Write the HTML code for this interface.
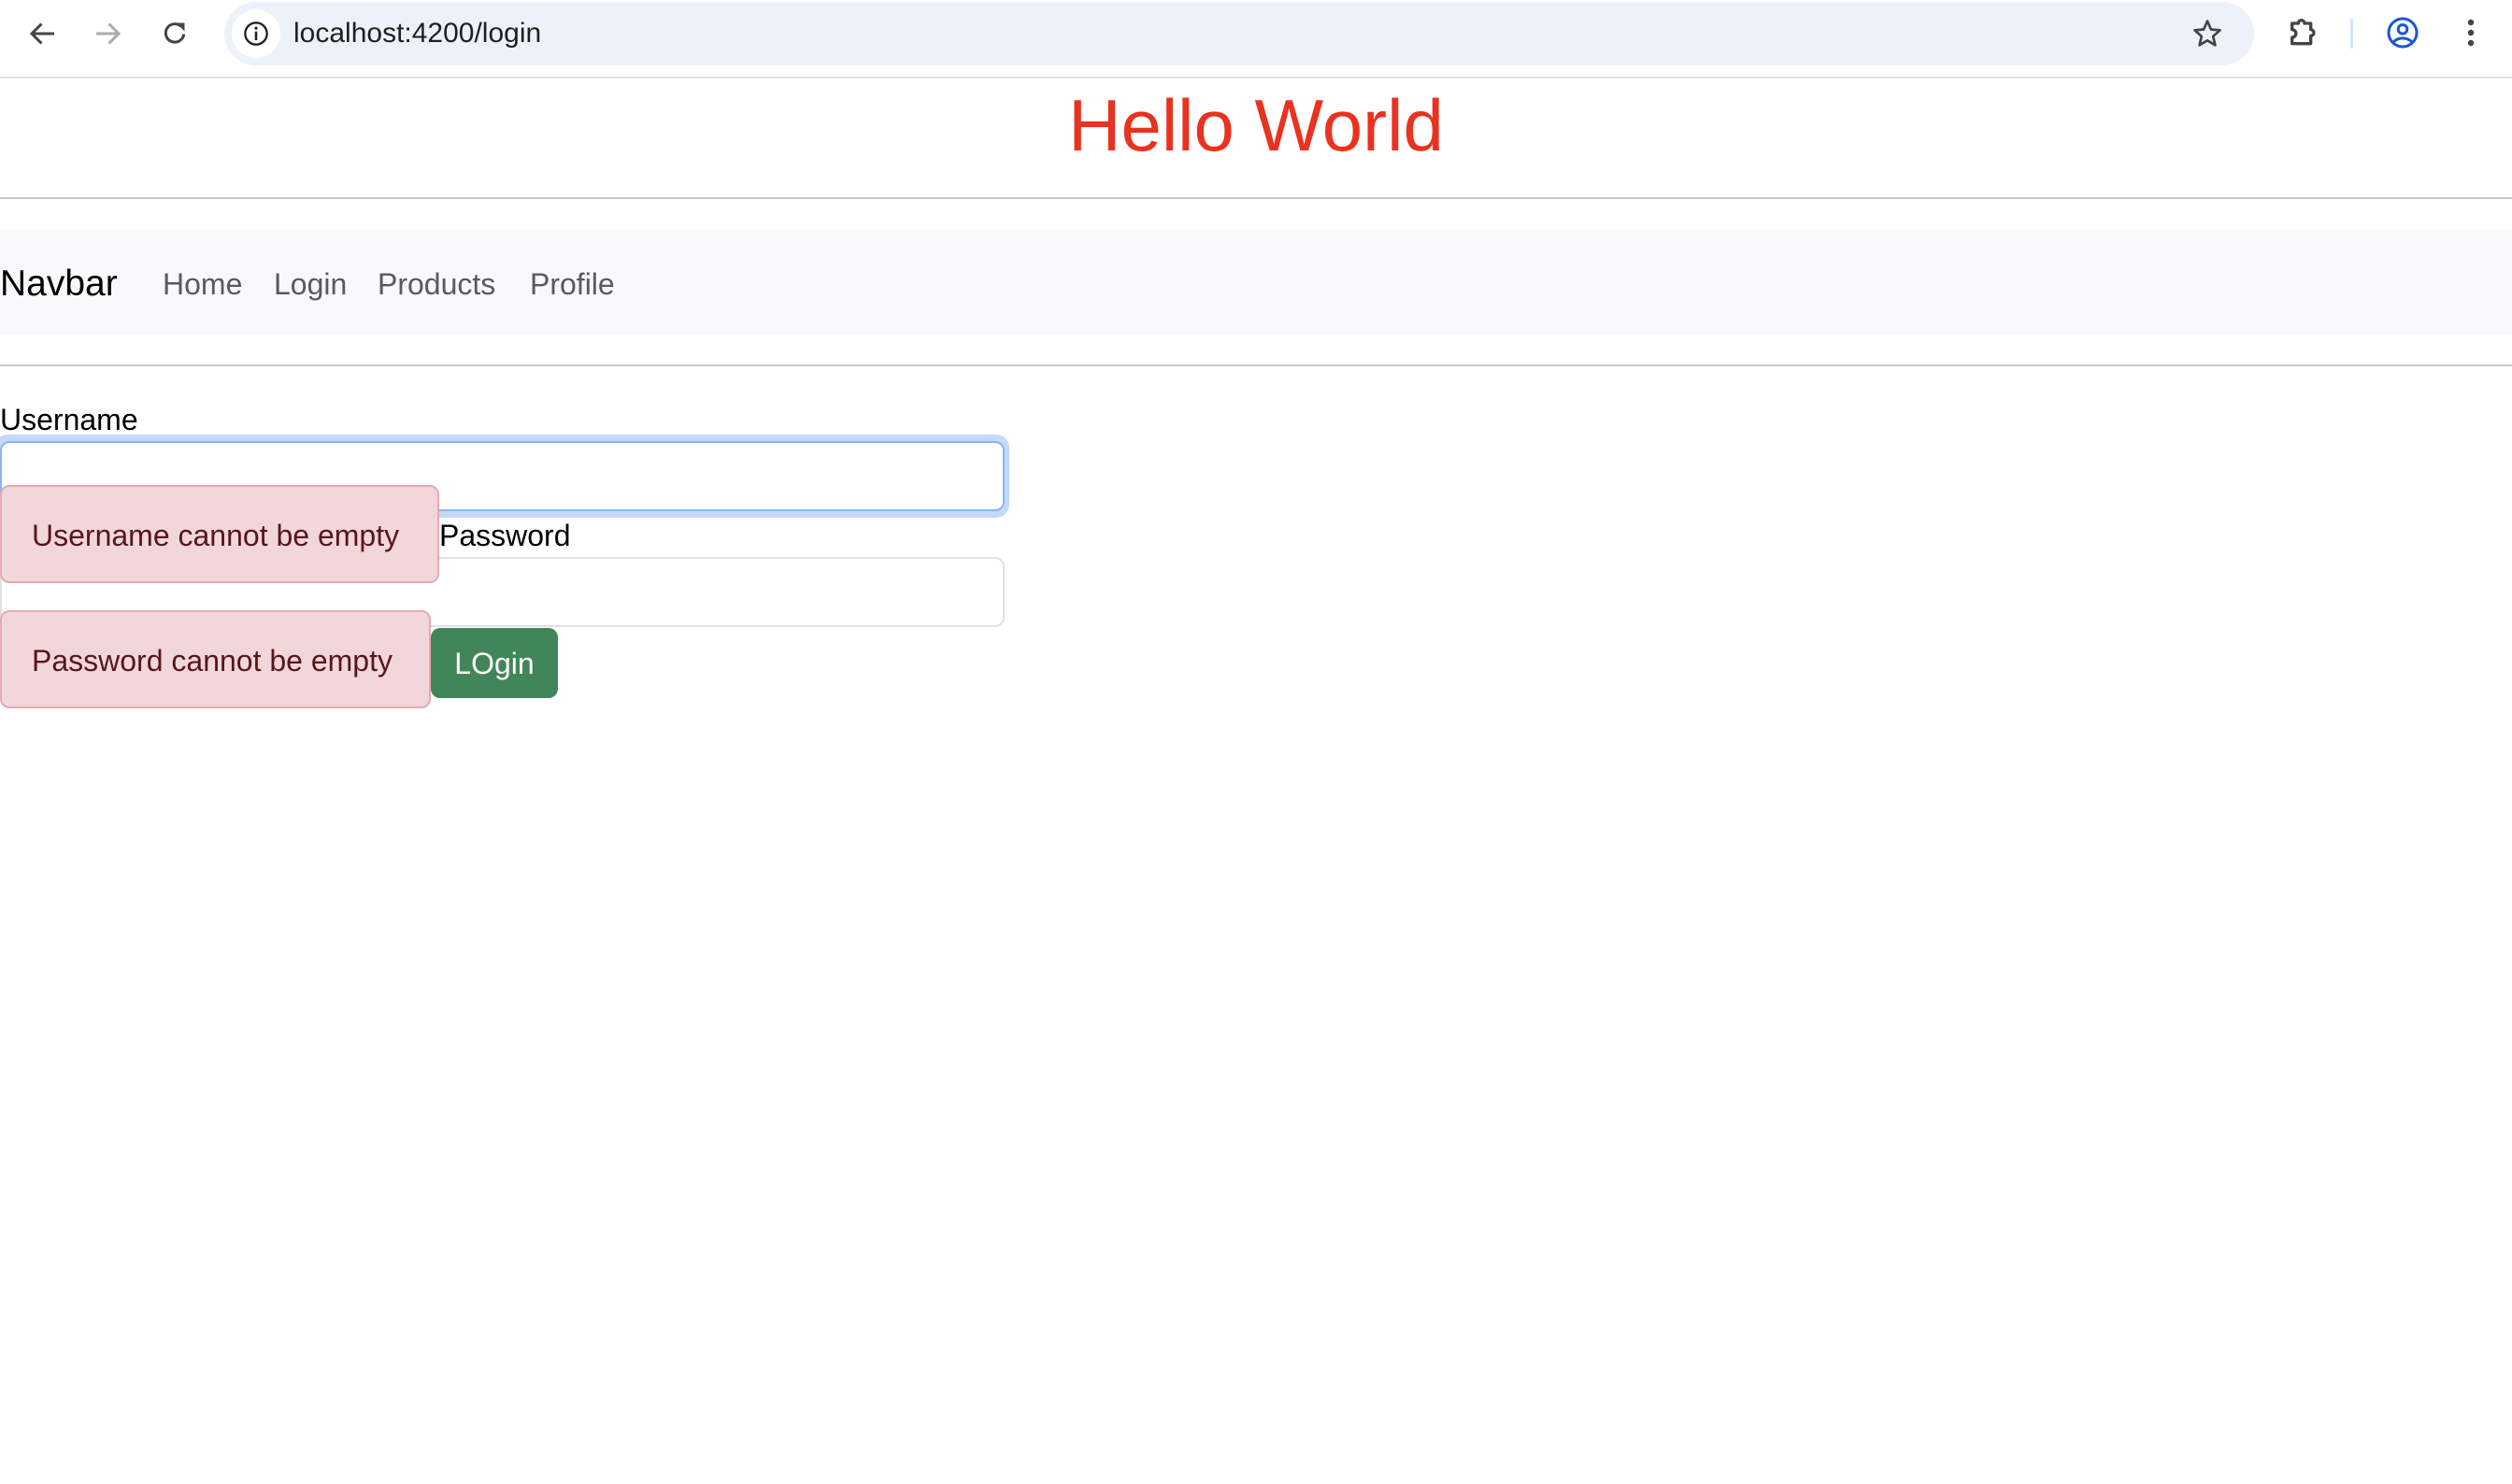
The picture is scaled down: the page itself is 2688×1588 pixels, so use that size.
<!DOCTYPE html>
<html><head><meta charset="utf-8"><style>
*{box-sizing:border-box;margin:0;padding:0}
body{width:2688px;height:1588px;background:#fff;font-family:"Liberation Sans",sans-serif;position:relative;overflow:hidden;color:#212529}
.a{position:absolute}
.t{position:absolute;white-space:nowrap;line-height:1}
</style></head><body>
<!-- toolbar -->
<div class="a" style="left:0;top:0;width:2688px;height:82px;background:#fff"></div>
<div class="a" style="left:0;top:82px;width:2688px;height:2px;background:#e1e1e1"></div>
<svg class="a" style="left:28px;top:18px" width="36" height="36" viewBox="0 0 24 24"><path d="M20 12H5M11 5l-7 7 7 7" fill="none" stroke="#444" stroke-width="2"/></svg>
<svg class="a" style="left:97px;top:18px" width="36" height="36" viewBox="0 0 24 24"><path d="M4 12h15M13 5l7 7-7 7" fill="none" stroke="#aaa" stroke-width="2"/></svg>
<svg class="a" style="left:169px;top:17px" width="36" height="36" viewBox="0 0 24 24"><path d="M18.5 13A6.5 6.5 0 1 1 16.5 7.5" fill="none" stroke="#444" stroke-width="2"/><path d="M13 5h6v6z" fill="#444"/></svg>
<div class="a" style="left:240px;top:2px;width:2172px;height:68px;border-radius:34px;background:#edf2fa"></div>
<div class="a" style="left:248px;top:10px;width:52px;height:52px;border-radius:26px;background:#fff"></div>
<svg class="a" style="left:260px;top:22px" width="28" height="28" viewBox="0 0 24 24"><circle cx="12" cy="12" r="10" fill="none" stroke="#222" stroke-width="2"/><path d="M12 10v8" stroke="#222" stroke-width="2.2"/><circle cx="12" cy="7" r="1.4" fill="#222"/></svg>
<div class="t" style="left:314px;top:21px;font-size:30px;color:#1f1f1f">localhost:4200/login</div>
<svg class="a" style="left:2344px;top:18px" width="36" height="36" viewBox="0 0 24 24"><path d="M12 3l2.6 6 6.4.6-4.9 4.3 1.5 6.3L12 16.9 6.4 20.2l1.5-6.3L3 9.6l6.4-.6z" fill="none" stroke="#444" stroke-width="1.8" stroke-linejoin="round"/></svg>
<svg class="a" style="left:2446px;top:15px" width="40" height="40" viewBox="0 0 24 24"><path d="M4 6h4a2 2 0 0 1 4 0h4v4a2 2 0 0 1 0 4v5H4v-4a2 2 0 0 0 0-5z" fill="none" stroke="#444" stroke-width="2" stroke-linejoin="round"/></svg>
<div class="a" style="left:2515px;top:20px;width:3px;height:32px;background:#d3e3fd;border-radius:2px"></div>
<svg class="a" style="left:2553px;top:17px" width="36" height="36" viewBox="0 0 24 24"><circle cx="12" cy="12" r="10" fill="none" stroke="#1a57d1" stroke-width="2"/><circle cx="12" cy="9.5" r="3.2" fill="none" stroke="#1a57d1" stroke-width="2"/><path d="M5.5 18.5c3.5-3.5 9.5-3.5 13 0" fill="none" stroke="#1a57d1" stroke-width="2"/></svg>
<svg class="a" style="left:2636px;top:19px" width="16" height="32" viewBox="0 0 8 16"><circle cx="4" cy="2.5" r="1.6" fill="#444"/><circle cx="4" cy="8" r="1.6" fill="#444"/><circle cx="4" cy="13.5" r="1.6" fill="#444"/></svg>

<!-- header -->
<div class="t" style="left:0;width:2688px;text-align:center;top:95px;font-size:78px;color:#e9321f">Hello World</div>
<div class="a" style="left:0;top:211px;width:2688px;height:2px;background:#c8c8c8"></div>

<!-- navbar -->
<div class="a" style="left:0;top:245px;width:2688px;height:113px;background:#f8f9fa"></div>
<div class="t" style="left:0;top:284px;font-size:39px;color:#000">Navbar</div>
<div class="t" style="left:174px;top:288px;font-size:32px;color:#595a5c">Home</div>
<div class="t" style="left:293px;top:288px;font-size:32px;color:#595a5c">Login</div>
<div class="t" style="left:404px;top:288px;font-size:32px;color:#595a5c">Products</div>
<div class="t" style="left:567px;top:288px;font-size:32px;color:#595a5c">Profile</div>
<div class="a" style="left:0;top:390px;width:2688px;height:2px;background:#c8c8c8"></div>

<!-- form -->
<div class="t" style="left:0;top:433px;font-size:32px;color:#000">Username</div>
<div class="a" style="left:-6px;top:465px;width:1086px;height:89px;border-radius:14px;background:#c5d9fb"></div>
<div class="a" style="left:0;top:472px;width:1075px;height:75px;border-radius:10px;background:#fff;border:2px solid #86b4f7"></div>
<div class="a" style="left:0;top:596px;width:1075px;height:75px;border-radius:10px;background:#fff;border:2px solid #dee2e6"></div>
<div class="a" style="left:0;top:519px;width:470px;height:105px;border-radius:10px;background:#f2d7da;border:2px solid #e8a9b0"></div>
<div class="t" style="left:34px;top:557px;font-size:32px;color:#58151c">Username cannot be empty</div>
<div class="t" style="left:470px;top:557px;font-size:32px;color:#000">Password</div>
<div class="a" style="left:0;top:653px;width:461px;height:105px;border-radius:10px;background:#f2d7da;border:2px solid #e8a9b0"></div>
<div class="t" style="left:34px;top:691px;font-size:32px;color:#58151c">Password cannot be empty</div>
<div class="a" style="left:461px;top:672px;width:136px;height:75px;border-radius:10px;background:#418659"></div>
<div class="t" style="left:461px;width:136px;text-align:center;top:694px;font-size:32px;color:#fff">LOgin</div>
</body></html>
